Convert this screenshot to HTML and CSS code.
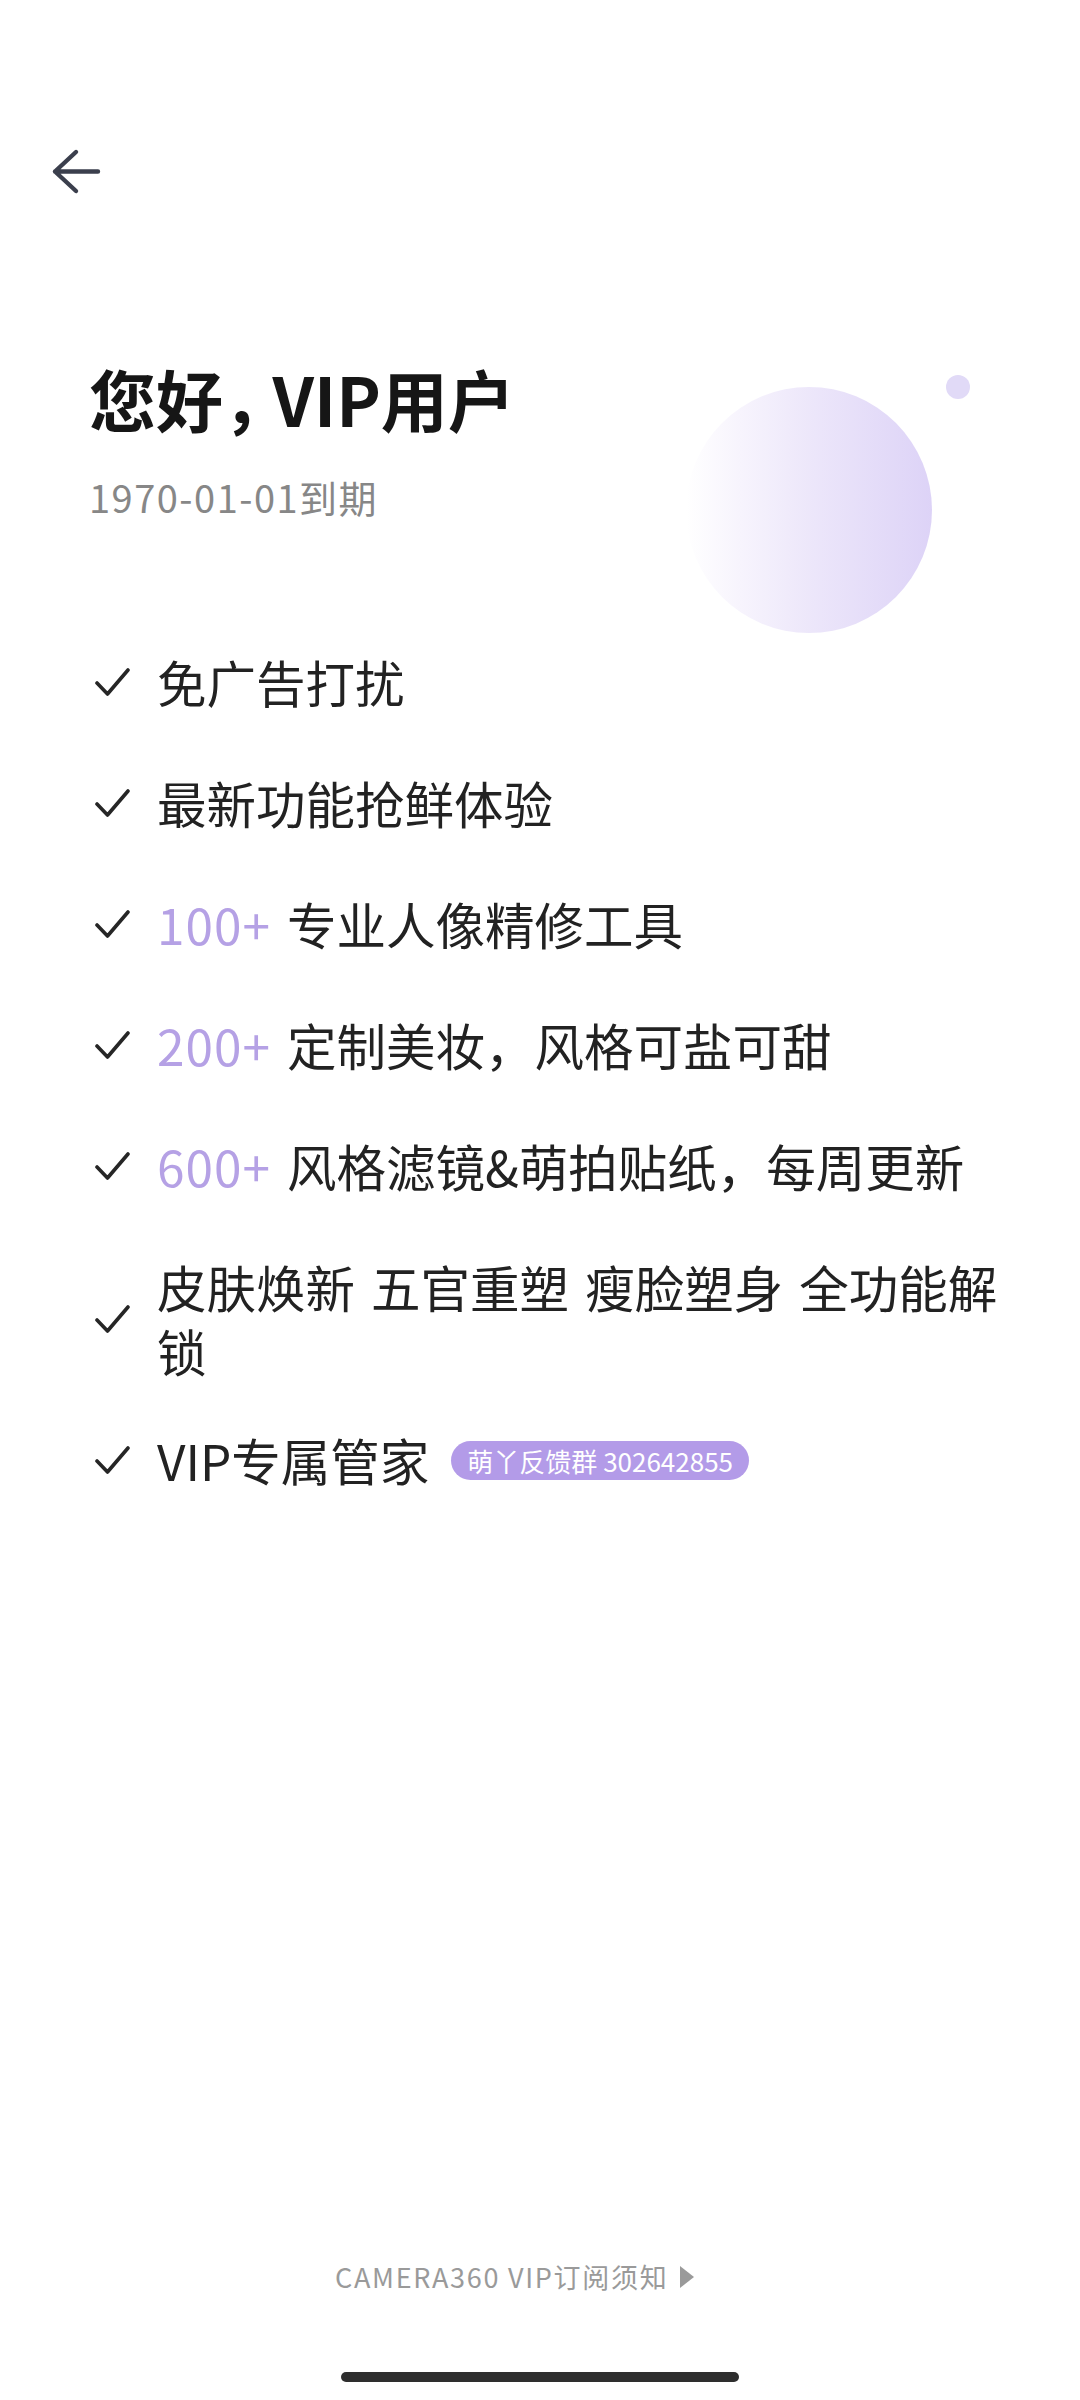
FILE: index.html
```html
<!DOCTYPE html>
<html lang="zh-CN">
<head>
<meta charset="utf-8">
<title>VIP</title>
<link rel="stylesheet" href="styles.css">
</head>
<body>
<div class="screen">
  <header class="topbar">
    <button class="back" aria-label="返回">
      <svg class="back-icon" width="50" height="50" viewBox="0 0 50 50" fill="none">
        <path d="M25 5 L4 24.5 L25 44 M4 24.5 H47" stroke="#3b3f4d" stroke-width="4.4" stroke-linecap="round" stroke-linejoin="round"/>
      </svg>
    </button>
  </header>

  <section class="hero">
    <h1 class="title">您好<span class="comma">，</span>VIP用户</h1>
    <p class="expire">1970-01-01到期</p>
    <span class="orb"></span>
    <span class="dot"></span>
  </section>

  <ul class="perks">
    <li class="perk"><svg class="check" width="36" height="32" viewBox="0 0 36 32" fill="none"><path d="M2 17 L12.5 28 L33 4" stroke="#262626" stroke-width="3.6" stroke-linecap="round" stroke-linejoin="round"/></svg><span class="perk-text">免广告打扰</span></li>
    <li class="perk"><svg class="check" width="36" height="32" viewBox="0 0 36 32" fill="none"><path d="M2 17 L12.5 28 L33 4" stroke="#262626" stroke-width="3.6" stroke-linecap="round" stroke-linejoin="round"/></svg><span class="perk-text">最新功能抢鲜体验</span></li>
    <li class="perk"><svg class="check" width="36" height="32" viewBox="0 0 36 32" fill="none"><path d="M2 17 L12.5 28 L33 4" stroke="#262626" stroke-width="3.6" stroke-linecap="round" stroke-linejoin="round"/></svg><span class="perk-text"><span class="num">100+</span> 专业人像精修工具</span></li>
    <li class="perk"><svg class="check" width="36" height="32" viewBox="0 0 36 32" fill="none"><path d="M2 17 L12.5 28 L33 4" stroke="#262626" stroke-width="3.6" stroke-linecap="round" stroke-linejoin="round"/></svg><span class="perk-text"><span class="num">200+</span> 定制美妆，风格可盐可甜</span></li>
    <li class="perk"><svg class="check" width="36" height="32" viewBox="0 0 36 32" fill="none"><path d="M2 17 L12.5 28 L33 4" stroke="#262626" stroke-width="3.6" stroke-linecap="round" stroke-linejoin="round"/></svg><span class="perk-text"><span class="num">600+</span> 风格滤镜&amp;萌拍贴纸，每周更新</span></li>
    <li class="perk"><svg class="check" width="36" height="32" viewBox="0 0 36 32" fill="none"><path d="M2 17 L12.5 28 L33 4" stroke="#262626" stroke-width="3.6" stroke-linecap="round" stroke-linejoin="round"/></svg><span class="perk-text">皮肤焕新 五官重塑 瘦脸塑身 全功能解锁</span></li>
    <li class="perk perk-last"><svg class="check" width="36" height="32" viewBox="0 0 36 32" fill="none"><path d="M2 17 L12.5 28 L33 4" stroke="#262626" stroke-width="3.6" stroke-linecap="round" stroke-linejoin="round"/></svg><span class="perk-text">VIP专属管家</span><span class="badge">萌丫反馈群 302642855</span></li>
  </ul>

  <div class="spacer"></div>

  <footer class="footer">
    <span class="notice">CAMERA360 VIP订阅须知</span>
    <span class="tri"></span>
  </footer>
  <div class="home-indicator"></div>
</div>
</body>
</html>
```

FILE: styles.css
```css
* { box-sizing: border-box; }

html, body {
  margin: 0;
  padding: 0;
  background: #ffffff;
}

body {
  font-family: "Noto Sans CJK SC", "Noto Sans", sans-serif;
  color: #222222;
}

.screen {
  width: 1080px;
  min-height: 2400px;
  display: flex;
  flex-direction: column;
  overflow: hidden;
}

.topbar {
  padding: 147px 0 0 51px;
  height: 197px;
}

.back {
  border: 0;
  padding: 0;
  margin: 0;
  background: none;
  display: block;
  width: 50px;
  height: 50px;
}

.back-icon { display: block; }

.hero {
  position: relative;
  padding-left: 89px;
  margin-top: 168px;
}

.title {
  margin: 0;
  font-size: 67px;
  line-height: 66px;
  font-weight: 700;
  color: #161616;
  position: relative;
  z-index: 1;
}

.comma {
  letter-spacing: -0.26em;
}

.expire {
  margin: 47px 0 0 0;
  font-size: 38px;
  line-height: 38px;
  color: #878787;
  letter-spacing: 1.5px;
  position: relative;
  z-index: 1;
}

.orb {
  position: absolute;
  left: 686px;
  top: 22px;
  width: 246px;
  height: 246px;
  border-radius: 50%;
  background: linear-gradient(90deg, rgba(255,255,255,0) 0%, #f7f4fd 22%, #ece6fa 52%, #ddd3f7 100%);
}

.dot {
  position: absolute;
  left: 946px;
  top: 10px;
  width: 24px;
  height: 24px;
  border-radius: 50%;
  background: #e1daf7;
}

.perks {
  list-style: none;
  margin: 134px 0 0 0;
  padding: 0 50px 0 95px;
  display: flex;
  flex-direction: column;
  gap: 57px;
}

.perk {
  display: flex;
  align-items: center;
}

.perk-last {
  margin-top: -12px;
}

.check {
  flex: none;
  display: block;
  margin-right: 26px;
}

.perk-text {
  font-size: 49.5px;
  line-height: 64px;
  color: #222222;
  word-spacing: 5px;
}

.num {
  color: #b5a1e5;
  letter-spacing: 1px;
}

.badge {
  flex: none;
  margin-left: 22px;
  height: 39px;
  padding: 0 16px;
  border-radius: 20px;
  background: #b39be8;
  color: #ffffff;
  font-size: 26px;
  line-height: 39px;
}

.spacer { flex: 1; }

.footer {
  display: flex;
  align-items: center;
  padding-left: 335px;
  height: 40px;
}

.notice {
  font-size: 27px;
  line-height: 40px;
  color: #9a9a9a;
  letter-spacing: 1.7px;
}

.tri {
  margin-left: 12px;
  width: 0;
  height: 0;
  border-top: 11px solid transparent;
  border-bottom: 11px solid transparent;
  border-left: 14px solid #9a9a9a;
}

.home-indicator {
  margin: 75px auto 18px auto;
  width: 398px;
  height: 10px;
  border-radius: 5px;
  background: #2e2e2e;
}
```
